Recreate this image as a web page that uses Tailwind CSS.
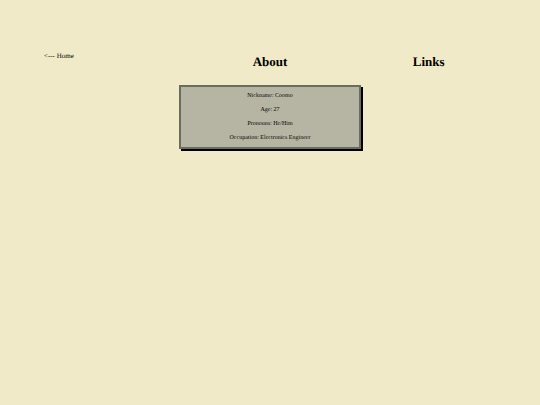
<!DOCTYPE html>
<html lang="en">
<head>
    <meta charset="UTF-8">
    <meta name="viewport" content="width=device-width, initial-scale=1.0">
    <title>About</title>
    <script src="https://cdn.jsdelivr.net/npm/@tailwindcss/browser@4"></script>
</head>
<body class="min-h-screen bg-[#f0eac8] px-11 pt-12 font-['Liberation_Serif',serif] text-[6px] leading-[14px] text-black [text-rendering:geometricPrecision]">
    <div class="grid grid-cols-[14fr_19fr_14fr]">
        <nav class="pt-px">
            <a href="#home" class="text-[7px]">&lt;--- Home</a>
        </nav>

        <main class="pt-1.5 text-center">
            <h1 class="text-[13px] leading-4 font-bold">About</h1>
            <div class="mt-[15px] border-2 border-[#6d6c5a] bg-[#b6b4a2] py-0.5 shadow-[2px_2px_0_#000]">
                <p>Nickname: Coomo</p>
                <p>Age: 27</p>
                <p>Pronouns: He/Him</p>
                <p>Occupation: Electronics Engineer</p>
            </div>
        </main>

        <aside class="pt-1.5 text-center">
            <h1 class="text-[13px] leading-4 font-bold">Links</h1>
        </aside>
    </div>
</body>
</html>
